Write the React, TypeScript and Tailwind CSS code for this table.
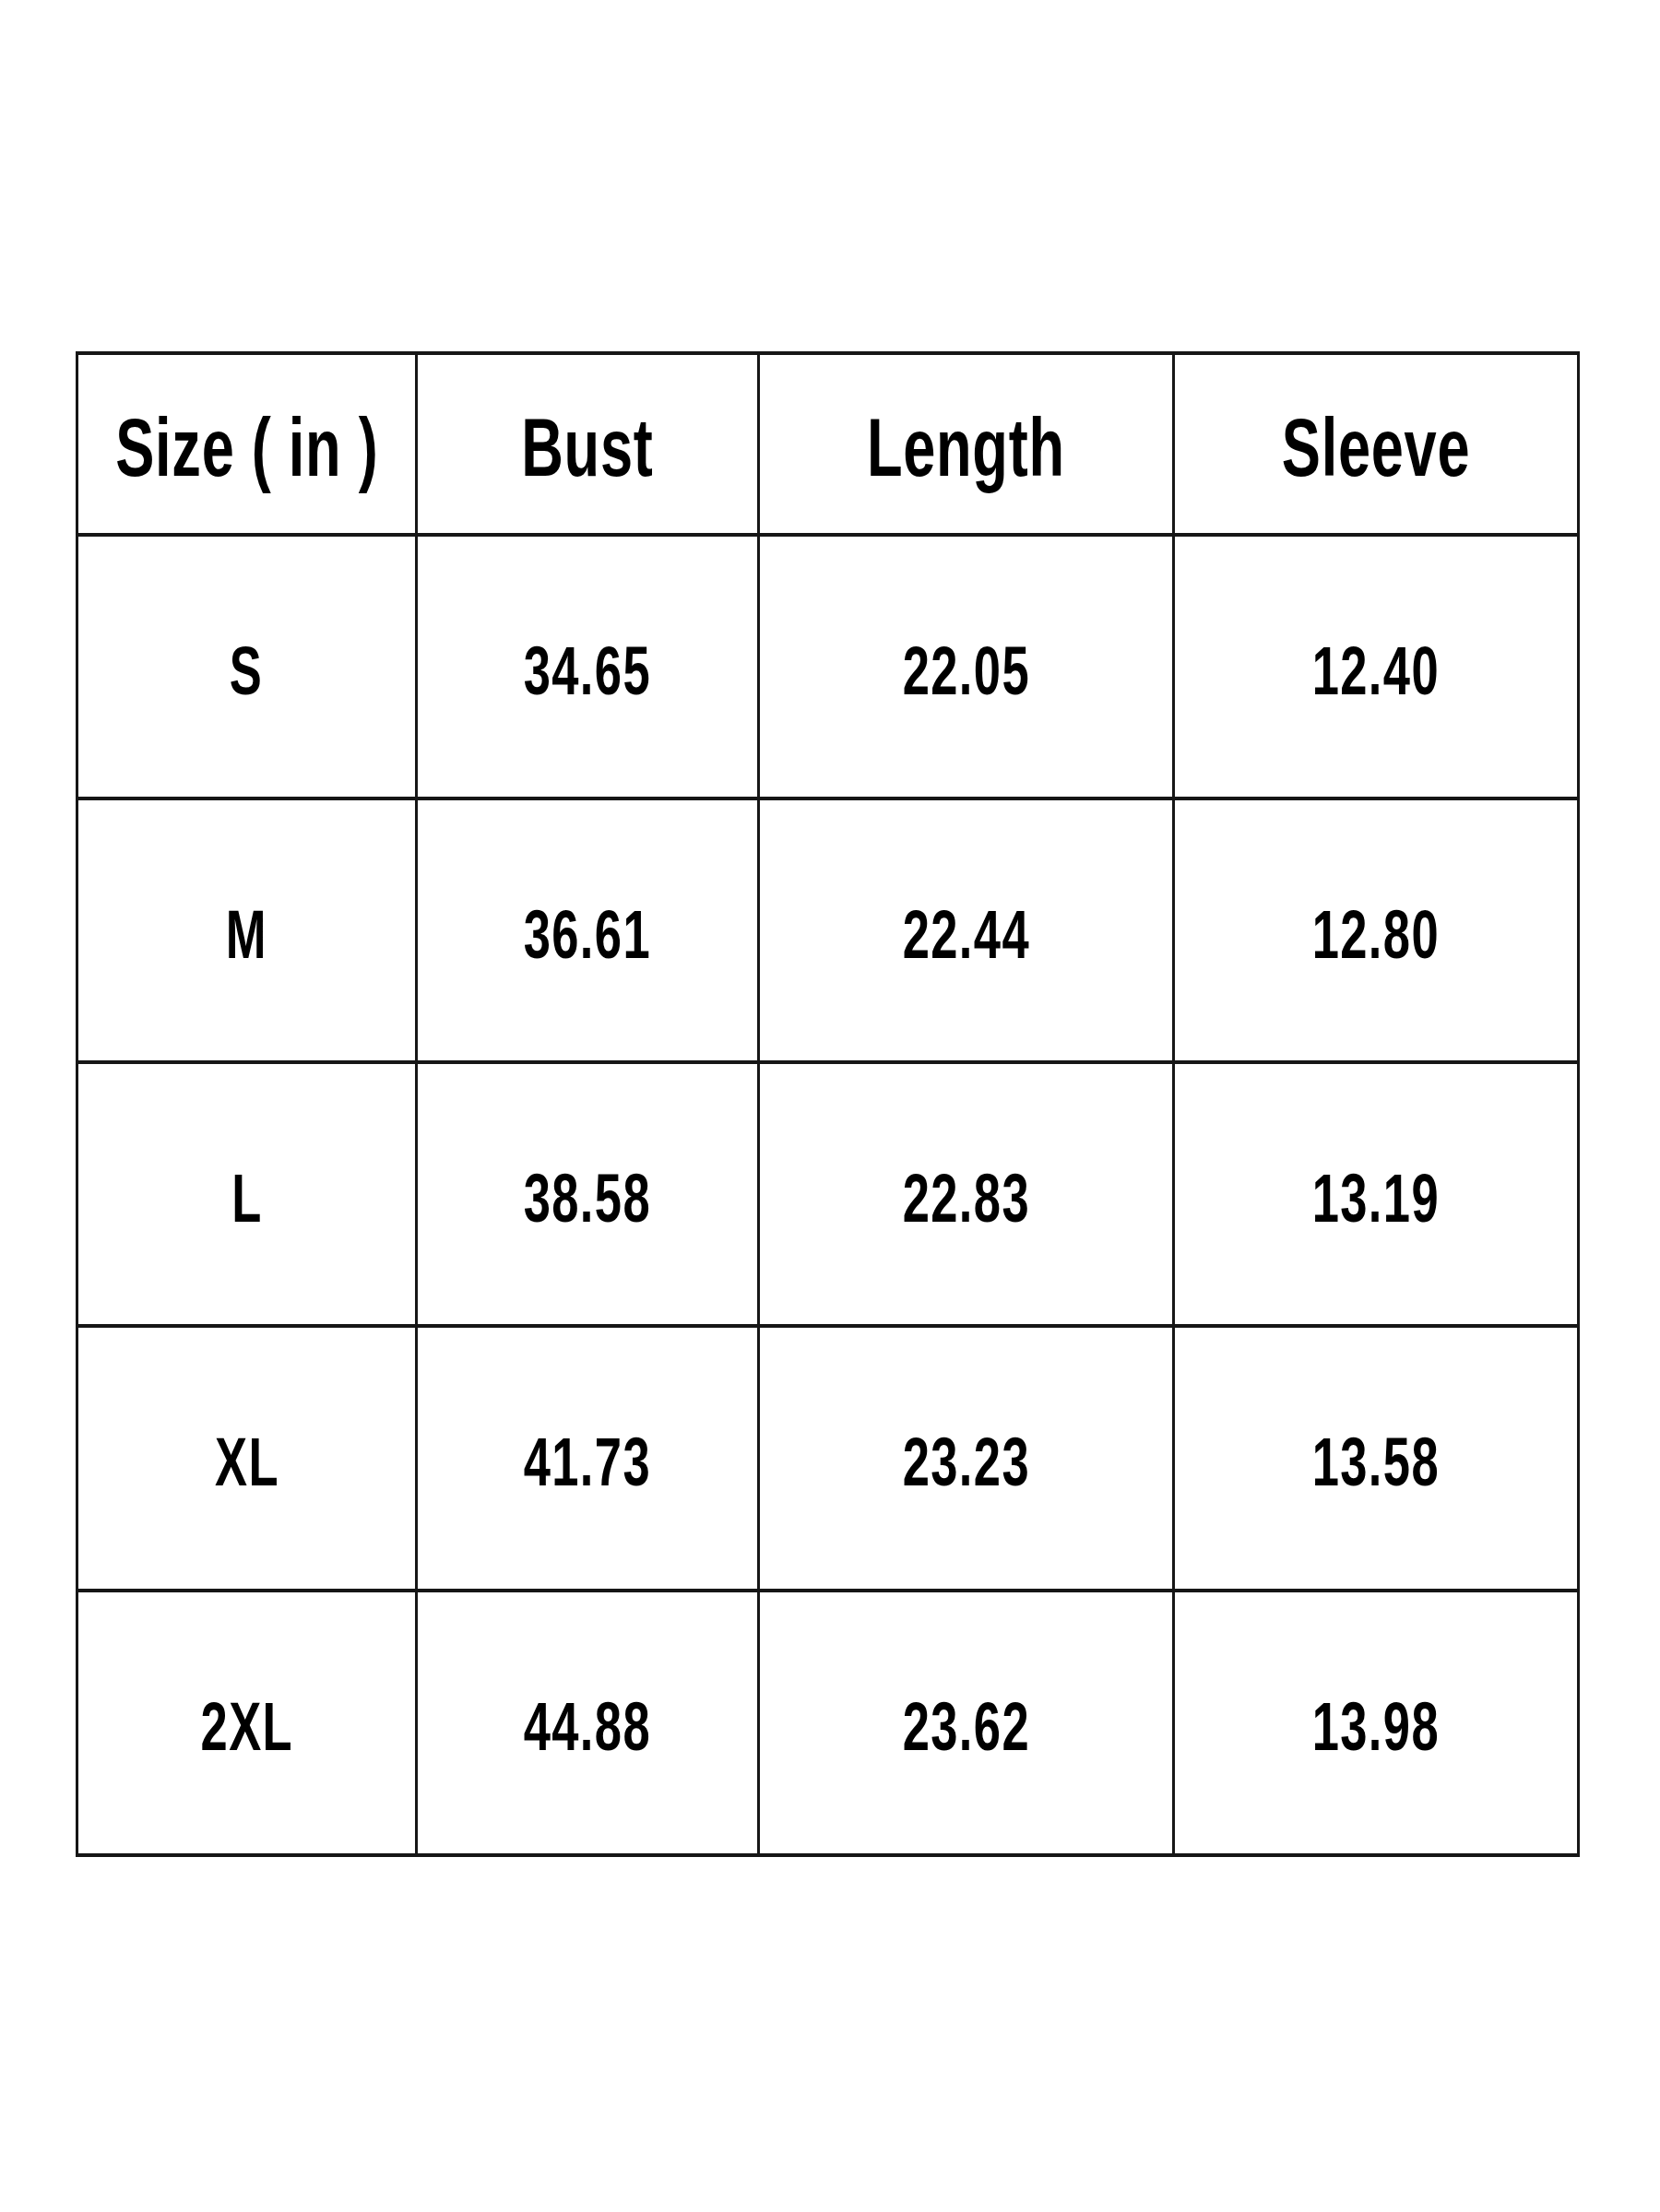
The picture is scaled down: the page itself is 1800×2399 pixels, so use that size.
import React from "react";

const headers = ["Size ( in )", "Bust", "Length", "Sleeve"];

const rows = [
  ["S", "34.65", "22.05", "12.40"],
  ["M", "36.61", "22.44", "12.80"],
  ["L", "38.58", "22.83", "13.19"],
  ["XL", "41.73", "23.23", "13.58"],
  ["2XL", "44.88", "23.62", "13.98"],
];

export default function App() {
  return (
    <div className="w-[1800px] h-[2399px] bg-white pt-[381px] pl-[82px] font-['Liberation_Sans',Arial,sans-serif] text-black">
      <div className="grid w-[1631px] grid-cols-[365px_368px_447px_436px] grid-rows-[193px_282px_282px_282px_283px_283px] gap-x-[3px] gap-y-[4px] bg-[#161616] px-[3px] py-[4px]">
        {headers.map((h) => (
          <div key={h} className="bg-white flex items-center justify-center pt-[8px]">
            <span className="inline-block whitespace-pre text-[89px] font-bold leading-none tracking-[1px] scale-x-[0.71]">{h}</span>
          </div>
        ))}
        {rows.map((r) =>
          r.map((cell, i) => (
            <div key={r[0] + i} className="bg-white flex items-center justify-center pt-[8px]">
              <span className="inline-block text-[75px] font-bold leading-none tracking-[2px] scale-x-[0.7]">{cell}</span>
            </div>
          ))
        )}
      </div>
    </div>
  );
}
